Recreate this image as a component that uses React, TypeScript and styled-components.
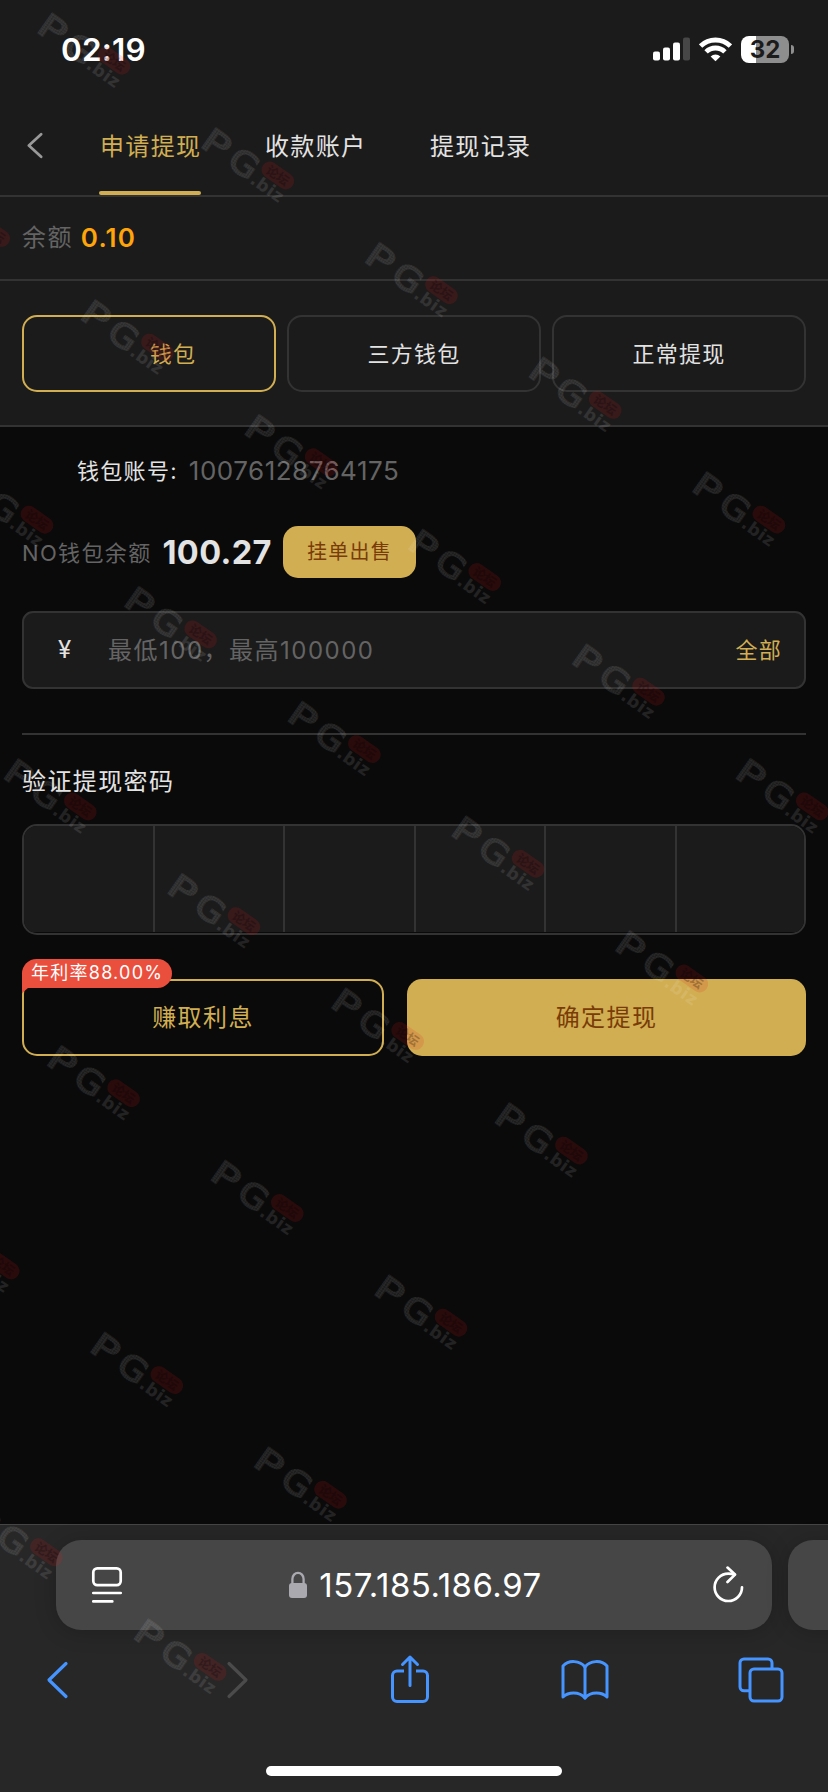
import React from "react";
import styled, { createGlobalStyle, css } from "styled-components";

const color = {
  page: "#0a0a0a",
  panel: "#1b1b1b",
  line: "#333333",
  gold: "#d1ae52",
  goldInk: "#793c08",
  text: "#e3e3e3",
  muted: "#646464",
  blue: "#4694ff",
};

const GlobalStyle = createGlobalStyle`
  * { box-sizing: border-box; }
  body { margin: 0; background: ${color.page}; }
  button, input { font: inherit; letter-spacing: inherit; border: 0; background: none; padding: 0; margin: 0; color: inherit; }
`;

const Screen = styled.div`
  position: relative;
  display: flex;
  flex-direction: column;
  width: 828px;
  height: 1792px;
  overflow: hidden;
  background: ${color.page};
  color: ${color.text};
  font-family: Inter, "Noto Sans CJK SC", sans-serif;
  font-size: 24px;
  line-height: 32px;
  letter-spacing: 1.4px;
  white-space: nowrap;
`;

/* ---------- status bar ---------- */

const StatusBar = styled.header`
  display: flex;
  align-items: center;
  justify-content: space-between;
  height: 98px;
  padding: 0 34px 0 61px;
  background: ${color.panel};
`;

const Clock = styled.time`
  color: #fff;
  font-size: 31.5px;
  font-weight: 600;
  letter-spacing: 0.2px;
  padding-top: 2px;
`;

const StatusIcons = styled.div`
  display: flex;
  align-items: center;
  gap: 9px;
`;

const Battery = styled.div`
  display: flex;
  align-items: center;
  gap: 2px;
`;

const BatteryBody = styled.div`
  display: flex;
  align-items: center;
  justify-content: center;
  width: 48px;
  height: 27px;
  padding-top: 2px;
  border-radius: 8px;
  background: linear-gradient(90deg, #fff 15px, #8e8e8e 15px);
  color: ${color.panel};
  font-size: 24px;
  font-weight: 700;
  letter-spacing: 0;
`;

const BatteryTip = styled.div`
  width: 3px;
  height: 9px;
  border-radius: 0 4px 4px 0;
  background: #8e8e8e;
`;

/* ---------- tabs ---------- */

const NavBar = styled.nav`
  display: flex;
  height: 99px;
  padding-left: 27px;
  gap: 56px;
  background: ${color.panel};
  border-bottom: 2px solid ${color.line};
`;

const BackButton = styled.button`
  display: flex;
  align-items: center;
  width: 16px;
  height: 94px;
`;

const TabList = styled.div`
  display: flex;
  gap: 63px;
`;

const Tab = styled.button<{ $active?: boolean }>`
  display: flex;
  flex-direction: column;
  align-items: center;
  justify-content: space-between;
  width: 102px;
  height: 97px;
  color: ${(p) => (p.$active ? color.gold : color.text)};
`;

const TabLabel = styled.span`
  padding-top: 33px;
  margin-right: -1.4px;
`;

const TabMarker = styled.span`
  width: 102px;
  height: 4px;
  border-radius: 2px;
  background: ${color.gold};
`;

/* ---------- balance and channels ---------- */

const BalanceRow = styled.section`
  display: flex;
  align-items: center;
  gap: 8px;
  height: 84px;
  padding: 0 22px;
  background: ${color.panel};
  border-bottom: 2px solid ${color.line};
`;

const Muted = styled.span`
  color: ${color.muted};
`;

const BalanceValue = styled.strong`
  color: #ffa50a;
  font-size: 26px;
  font-weight: 600;
  letter-spacing: 1.2px;
`;

const ChannelRow = styled.section`
  display: grid;
  grid-template-columns: repeat(3, 1fr);
  gap: 11px;
  height: 146px;
  padding: 34px 22px 33px;
  background: ${color.panel};
  border-bottom: 2px solid ${color.line};
`;

const Channel = styled.button<{ $active?: boolean }>`
  display: flex;
  align-items: center;
  justify-content: center;
  border: 2px solid ${(p) => (p.$active ? color.gold : color.line)};
  border-radius: 15px;
  color: ${(p) => (p.$active ? color.gold : color.text)};
  font-size: 22px;
  letter-spacing: 1.3px;
`;

const IconSlot = styled.span<{ $width: number }>`
  flex: none;
  width: ${(p) => p.$width}px;
`;

/* ---------- form ---------- */

const Form = styled.main`
  display: flex;
  flex-direction: column;
  flex: 1;
  padding: 0 22px;
`;

const AccountRow = styled.div`
  display: flex;
  align-items: center;
  height: 88px;
  font-size: 22px;
  letter-spacing: 1.3px;
`;

const AccountNumber = styled.span`
  margin-left: 11px;
  color: ${color.muted};
  font-size: 26px;
  letter-spacing: 0.5px;
`;

const WalletRow = styled.div`
  display: flex;
  align-items: center;
  height: 74px;
  font-size: 22px;
  letter-spacing: 1.35px;
`;

const WalletLabel = styled(Muted)`
  flex: none;
  width: 130px;
  padding-top: 2px;
`;

const WalletValue = styled.strong`
  flex: none;
  width: 131px;
  padding: 1px 0 0 10.5px;
  font-size: 32.5px;
  font-weight: 700;
  letter-spacing: 0.35px;
`;

const SellButton = styled.button`
  width: 133px;
  height: 52px;
  border-radius: 15px;
  background: ${color.gold};
  color: ${color.goldInk};
  font-size: 20px;
  letter-spacing: 1.3px;
`;

const AmountField = styled.label`
  display: flex;
  align-items: center;
  height: 78px;
  margin-top: 22px;
  padding: 0 22px 0 34px;
  border: 2px solid ${color.line};
  border-radius: 11px;
  background: ${color.panel};
`;

const Currency = styled.span`
  width: 50px;
  font-size: 24px;
`;

const AmountInput = styled.input`
  flex: 1;
  min-width: 0;
  height: 40px;
  outline: 0;
  letter-spacing: 1.5px;
  &::placeholder {
    color: ${color.muted};
    opacity: 1;
  }
`;

const AllButton = styled.button`
  color: ${color.gold};
  font-size: 22px;
  letter-spacing: 1.3px;
`;

const PasswordSection = styled.section`
  margin-top: 44px;
  padding-top: 31px;
  border-top: 2px solid ${color.line};
`;

const PasswordBox = styled.div`
  display: grid;
  grid-template-columns: repeat(5, 130.6px) 1fr;
  height: 111px;
  margin-top: 26px;
  padding-bottom: 1px;
  border: 2px solid ${color.line};
  border-radius: 15px;
  overflow: hidden;
`;

const PasswordCell = styled.span`
  background: ${color.panel};
  &:not(:last-child) {
    border-right: 2px solid ${color.line};
  }
`;

const Actions = styled.div`
  display: flex;
  gap: 23px;
  margin-top: 44px;
`;

const actionButton = css`
  display: flex;
  align-items: center;
  justify-content: center;
  height: 77px;
  border-radius: 15px;
  font-size: 24px;
`;

const EarnButton = styled.button`
  ${actionButton}
  position: relative;
  width: 362px;
  border: 2px solid ${color.gold};
  color: ${color.gold};
`;

const ConfirmButton = styled.button`
  ${actionButton}
  flex: 1;
  background: ${color.gold};
  color: ${color.goldInk};
`;

const RateBadge = styled.span`
  position: absolute;
  left: -2px;
  top: -22px;
  display: flex;
  align-items: center;
  width: 150px;
  height: 29px;
  padding: 0 0 2px 9px;
  border-radius: 15px 15px 15px 0;
  background: #ea4e3d;
  color: #fff;
  font-size: 18px;
  letter-spacing: 1.25px;
  &::after {
    content: "";
    position: absolute;
    left: 0;
    top: 100%;
    border-style: solid;
    border-width: 5px 6px 0 0;
    border-color: #ea4e3d transparent transparent;
  }
`;

/* ---------- browser chrome ---------- */

const Browser = styled.footer`
  display: flex;
  flex-direction: column;
  height: 268px;
  background: #272727;
  border-top: 1px solid #454545;
`;

const AddressRow = styled.div`
  display: flex;
  gap: 16px;
  height: 90px;
  margin: 15px 0 0 56px;
`;

const AddressBar = styled.div`
  flex: none;
  display: flex;
  align-items: center;
  justify-content: space-between;
  width: 716px;
  padding: 0 28px 0 35px;
  border-radius: 25px;
  background: #464646;
  box-shadow: 0 2px 22px rgba(0, 0, 0, 0.2);
`;

const NextTab = styled.div`
  flex: none;
  width: 80px;
  border-radius: 25px;
  background: #464646;
  box-shadow: 0 2px 22px rgba(0, 0, 0, 0.2);
`;

const Address = styled.span`
  display: flex;
  align-items: center;
  gap: 12px;
  margin-right: 4px;
  color: #fff;
  font-size: 33px;
  letter-spacing: 0.5px;
`;

const Toolbar = styled.div`
  display: grid;
  grid-template-columns: 179.5px 164.5px 170.5px 177px auto;
  align-items: center;
  height: 100px;
  padding-left: 46px;
`;

const HomeIndicator = styled.div`
  width: 296px;
  height: 10px;
  margin: 36px auto 0;
  border-radius: 5px;
  background: #fff;
`;

const WatermarkLayer = styled.svg`
  position: absolute;
  inset: 0;
  pointer-events: none;
`;

/* Column and row of each stamp on the diagonal lattice. */
const stamps: [number, number][] = [
  [0, 0], [1, 0], [2, 0], [3, 0], [4, 0],
  [-1, 1], [0, 1], [1, 1], [2, 1], [3, 1], [4, 1],
  [-1, 2], [0, 2], [1, 2], [2, 2], [3, 2],
  [-1, 3], [0, 3], [1, 3], [2, 3],
  [-1, 4], [0, 4], [1, 4],
  [-2, 5], [-1, 5], [0, 5],
  [-2, 6], [-1, 6],
];

function Watermarks() {
  return (
    <WatermarkLayer width="828" height="1792" viewBox="0 0 828 1792">
      <defs>
        <pattern id="mesh" width="2.5" height="2.5" patternUnits="userSpaceOnUse">
          <rect width="2.5" height="2.5" fill="#fff" opacity="0.55" />
          <rect width="1.6" height="1.6" fill="#fff" />
        </pattern>
      </defs>
      {stamps.map(([a, c]) => (
        <g
          key={`${a}:${c}`}
          transform={`translate(${36.5 + a * 163.7 + c * 43.3} ${33 + a * 114.7 + c * 286.8}) rotate(35)`}
          fontFamily="DejaVu Sans"
          letterSpacing="0"
        >
          <text x="-2.5" y="-1" fontSize="33" fill="url(#mesh)" stroke="url(#mesh)" strokeWidth="1.7" opacity="0.12" textLength="27" lengthAdjust="spacingAndGlyphs">P</text>
          <text x="30.5" y="-0.5" fontSize="33" fill="url(#mesh)" stroke="url(#mesh)" strokeWidth="1.7" opacity="0.12" textLength="29" lengthAdjust="spacingAndGlyphs">G</text>
          <rect x="61.5" y="-30" width="36" height="16.5" rx="8" fill="#e8141e" opacity="0.14" />
          <text x="67" y="-17" fontSize="12.5" fontWeight="700" fontFamily="Noto Sans CJK SC" fill="#000" opacity="0.25">论坛</text>
          <text x="60" y="0.5" fontSize="17" fontWeight="700" fill="#fff" opacity="0.1" textLength="36" lengthAdjust="spacing">.biz</text>
        </g>
      ))}
    </WatermarkLayer>
  );
}

const SignalIcon = () => (
  <svg width="37" height="24" viewBox="0 0 37 24" fill="#fff">
    <rect x="0" y="14.5" width="7" height="9" rx="2" />
    <rect x="10" y="10.5" width="7" height="13" rx="2" />
    <rect x="20" y="5.5" width="7" height="18" rx="2" />
    <rect x="30" y="0.5" width="7" height="23" rx="2" fill="#474747" />
  </svg>
);

const WifiIcon = () => (
  <svg width="33" height="25" viewBox="0 0 33 25" fill="none" stroke="#fff" strokeWidth="4.8">
    <path d="M1.6 9.1a21.2 21.2 0 0 1 29.8 0" />
    <path d="M7.1 14.9a13.3 13.3 0 0 1 18.8 0" />
    <path d="M11.6 19.4a7 7 0 0 1 9.8 0L16.5 24.3z" fill="#fff" stroke="none" />
  </svg>
);

const BackIcon = () => (
  <svg width="17" height="27" viewBox="0 0 17 27" fill="none" stroke="#999" strokeWidth="2.9" strokeLinecap="round" strokeLinejoin="round">
    <path d="M15 1.5 2 13.5 15 25.5" />
  </svg>
);

const PageMenuIcon = () => (
  <svg width="32" height="38" viewBox="0 0 32 38" fill="none" stroke="#fff" strokeWidth="2.7" strokeLinecap="round">
    <rect x="2.3" y="2.3" width="27.4" height="16.8" rx="4" />
    <path d="M2.3 27h27.4M2.3 35.4h19" />
  </svg>
);

const LockIcon = () => (
  <svg width="18" height="28" viewBox="0 0 18 28">
    <rect x="0" y="12" width="18" height="15" rx="3" fill="#aaa9b0" />
    <path d="M3.4 13V8a5.6 6.2 0 0 1 11.2 0v5" fill="none" stroke="#aaa9b0" strokeWidth="2.3" />
  </svg>
);

const ReloadIcon = () => (
  <svg width="32" height="38" viewBox="0 0 32 38" fill="none" stroke="#fff" strokeWidth="2.7" strokeLinecap="round" strokeLinejoin="round">
    <path d="M22.5 8.6Q19.500 7.600 16.300 7.600A13.700 13.700 0 1 0 30 21.300" />
    <path d="M15.500 1.600l7.500 7-7.500 7.400" />
  </svg>
);

const ChevronIcon = ({ flip, stroke }: { flip?: boolean; stroke: string }) => (
  <svg width="23" height="38" viewBox="0 0 23 38" fill="none" stroke={stroke} strokeWidth="3.2" strokeLinecap="round" strokeLinejoin="round">
    <path d={flip ? "M3 2.5 20 19 3 35.5" : "M20 2.5 3 19 20 35.5"} />
  </svg>
);

const ShareIcon = () => (
  <svg width="40" height="52" viewBox="0 0 40 52" fill="none" stroke={color.blue} strokeWidth="3" strokeLinecap="round" strokeLinejoin="round">
    <path d="M14 17H7a4.5 4.5 0 0 0-4.5 4.5V43A4.5 4.5 0 0 0 7 47.5h26a4.5 4.5 0 0 0 4.5-4.5V21.5A4.5 4.5 0 0 0 33 17h-7" strokeLinecap="butt" />
    <path d="M20 31.5V3M12.5 10.5 20 3l7.5 7.5" />
  </svg>
);

const BookIcon = () => (
  <svg width="48" height="42" viewBox="0 0 48 42" fill="none" stroke={color.blue} strokeWidth="3" strokeLinecap="round" strokeLinejoin="round">
    <path d="M24 8C19 1.5 8 .5 2 7v31c5-5 16-6 22 1 6-7 17-6 22-1V7C40 .5 29 1.5 24 8z" />
    <path d="M24 8v31" />
  </svg>
);

const TabsIcon = () => (
  <svg width="46" height="46" viewBox="0 0 46 46" fill="none" stroke={color.blue} strokeWidth="3">
    <rect x="12" y="12" width="32" height="32" rx="4" />
    <path d="M12 33.8H6a4 4 0 0 1-4-4V6a4 4 0 0 1 4-4h24a4 4 0 0 1 4 4v6" />
  </svg>
);

export default function App() {
  return (
    <Screen>
      <GlobalStyle />
      <StatusBar>
        <Clock>02:19</Clock>
        <StatusIcons>
          <SignalIcon />
          <WifiIcon />
          <Battery>
            <BatteryBody>32</BatteryBody>
            <BatteryTip />
          </Battery>
        </StatusIcons>
      </StatusBar>

      <NavBar>
        <BackButton><BackIcon /></BackButton>
        <TabList>
          <Tab $active><TabLabel>申请提现</TabLabel><TabMarker /></Tab>
          <Tab><TabLabel>收款账户</TabLabel></Tab>
          <Tab><TabLabel>提现记录</TabLabel></Tab>
        </TabList>
      </NavBar>

      <BalanceRow>
        <Muted>余额</Muted>
        <BalanceValue>0.10</BalanceValue>
      </BalanceRow>

      <ChannelRow>
        <Channel $active><IconSlot $width={48} />钱包</Channel>
        <Channel>三方钱包</Channel>
        <Channel>正常提现</Channel>
      </ChannelRow>

      <Form>
        <AccountRow>
          <IconSlot $width={55} />
          钱包账号:
          <AccountNumber>10076128764175</AccountNumber>
        </AccountRow>
        <WalletRow>
          <WalletLabel>NO钱包余额</WalletLabel>
          <WalletValue>100.27</WalletValue>
          <SellButton>挂单出售</SellButton>
        </WalletRow>
        <AmountField>
          <Currency>¥</Currency>
          <AmountInput placeholder="最低100，最高100000" />
          <AllButton>全部</AllButton>
        </AmountField>

        <PasswordSection>
          验证提现密码
          <PasswordBox>
            {[0, 1, 2, 3, 4, 5].map((n) => <PasswordCell key={n} />)}
          </PasswordBox>
        </PasswordSection>

        <Actions>
          <EarnButton>
            <RateBadge>年利率88.00%</RateBadge>
            赚取利息
          </EarnButton>
          <ConfirmButton>确定提现</ConfirmButton>
        </Actions>
      </Form>

      <Browser>
        <AddressRow>
          <AddressBar>
            <PageMenuIcon />
            <Address><LockIcon />157.185.186.97</Address>
            <ReloadIcon />
          </AddressBar>
          <NextTab />
        </AddressRow>
        <Toolbar>
          <ChevronIcon stroke={color.blue} />
          <ChevronIcon flip stroke="#4b4b4b" />
          <ShareIcon />
          <BookIcon />
          <TabsIcon />
        </Toolbar>
        <HomeIndicator />
      </Browser>
      <Watermarks />
    </Screen>
  );
}
